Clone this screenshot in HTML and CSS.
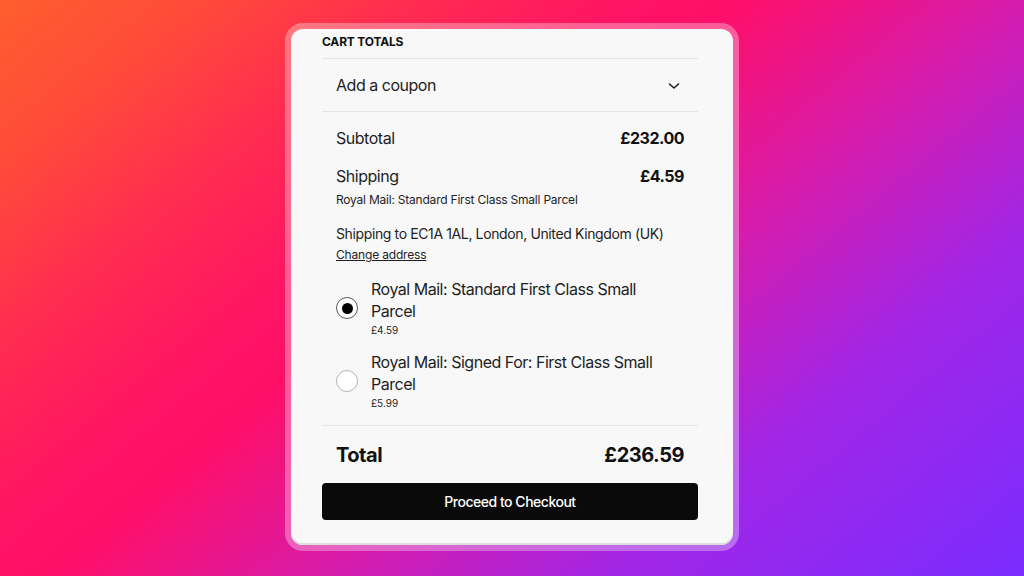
FILE: index.html
```html
<!DOCTYPE html>
<html lang="en">
<head>
<meta charset="utf-8">
<title>Cart totals</title>
<link rel="stylesheet" href="styles.css">
</head>
<body>
<main class="stage">
  <section class="frame">
    <div class="card">
      <h2 class="title">CART TOTALS</h2>
      <div class="coupon">
        <span>Add a coupon</span>
        <svg class="chevron" width="12" height="8" viewBox="0 0 12 8" aria-hidden="true"><path d="M1.5 2 L6 6 L10.5 2" fill="none" stroke="#1e1e1e" stroke-width="1.6" stroke-linecap="round" stroke-linejoin="round"/></svg>
      </div>
      <div class="details">
        <div class="row subtotal"><span>Subtotal</span><strong>£232.00</strong></div>
        <div class="row shipping"><span>Shipping</span><strong>£4.59</strong></div>
        <p class="method">Royal Mail: Standard First Class Small Parcel</p>
        <p class="dest">Shipping to EC1A 1AL, London, United Kingdom (UK)</p>
        <a class="change" href="#">Change address</a>
        <ul class="options">
          <li class="option">
            <span class="radio checked"></span>
            <div class="opt-text">
              <div class="opt-label">Royal Mail: Standard First Class Small Parcel</div>
              <div class="opt-price">£4.59</div>
            </div>
          </li>
          <li class="option">
            <span class="radio"></span>
            <div class="opt-text">
              <div class="opt-label">Royal Mail: Signed For: First Class Small Parcel</div>
              <div class="opt-price">£5.99</div>
            </div>
          </li>
        </ul>
      </div>
      <div class="row total"><span>Total</span><strong>£236.59</strong></div>
      <button class="checkout">Proceed to Checkout</button>
    </div>
  </section>
</main>
</body>
</html>
```
FILE: styles.css
```css
* { box-sizing: border-box; }
html, body { margin: 0; height: 100%; }
body {
  font-family: Inter, "Noto Sans", "Liberation Sans", sans-serif;
  letter-spacing: -0.03em;
  color: #1e1e1e;
  background: linear-gradient(140deg, #ff5e2e 0%, #ff4a3a 12%, #ff2c50 24%, #ff1464 37%, #ff0f68 43%, #d41cae 60%, #a126e6 76%, #7a2cff 100%);
  overflow: hidden;
}
.stage {
  display: flex;
  justify-content: center;
  padding-top: 23px;
}
.frame {
  width: 454px;
  padding: 6px;
  border-radius: 18px;
  background: rgba(255, 255, 255, 0.32);
}
.card {
  background: #f8f8f8;
  border-radius: 12px;
  padding: 5px 35px 25px 31px;
  box-shadow: inset 0 -2px 0 #dcdcdc;
  height: 516px;
}
.title {
  margin: 0;
  font-size: 12px;
  line-height: 16px;
  font-weight: 700;
  letter-spacing: -0.015em;
  color: #111;
}
.coupon {
  margin-top: 8px;
  border-top: 1px solid #e6e6e6;
  border-bottom: 1px solid #e6e6e6;
  height: 54px;
  display: flex;
  align-items: center;
  justify-content: space-between;
  padding: 0 18px 0 14px;
  font-size: 16px;
}
.chevron { display: block; margin-top: 2px; }
.details {
  padding: 14px 14px 15px;
  border-bottom: 1px solid #e6e6e6;
}
.row {
  display: flex;
  justify-content: space-between;
  align-items: center;
  font-size: 16px;
  line-height: 24px;
}
.row strong { font-weight: 700; color: #111; }
.shipping { margin-top: 14px; }
.method {
  margin: 4px 0 0;
  font-size: 12px;
  line-height: 16px;
  letter-spacing: -0.018em;
}
.dest {
  margin: 16px 0 0;
  font-size: 14px;
  line-height: 20px;
  letter-spacing: -0.027em;
}
.change {
  display: block;
  margin-top: 3px;
  font-size: 12px;
  line-height: 16px;
  letter-spacing: -0.015em;
  color: #1e1e1e;
  text-decoration: underline;
}
.options {
  list-style: none;
  margin: 16px 0 0;
  padding: 0;
  display: flex;
  flex-direction: column;
  gap: 15px;
}
.option {
  display: flex;
  align-items: center;
  gap: 13px;
}
.radio {
  flex: none;
  width: 22px;
  height: 22px;
  border-radius: 50%;
  border: 1px solid #b4b4b4;
  background: #fff;
  display: flex;
  align-items: center;
  justify-content: center;
}
.radio.checked { border: 1.5px solid #5a5a5a; }
.radio.checked::after {
  content: "";
  width: 11px;
  height: 11px;
  border-radius: 50%;
  background: #000;
}
.opt-label {
  font-size: 16px;
  line-height: 21.5px;
  padding-right: 10px;
}
.opt-price {
  font-size: 10px;
  line-height: 14px;
  letter-spacing: 0;
  margin-top: 1px;
}
.total {
  padding: 15px 14px 14px;
  font-size: 20px;
  line-height: 28px;
  font-weight: 700;
  color: #111;
}
.checkout {
  display: block;
  width: 100%;
  height: 37px;
  border: 0;
  border-radius: 4px;
  background: #0a0a0a;
  color: #fff;
  font-family: inherit;
  letter-spacing: inherit;
  font-size: 14px;
  font-weight: 500;
}
```
